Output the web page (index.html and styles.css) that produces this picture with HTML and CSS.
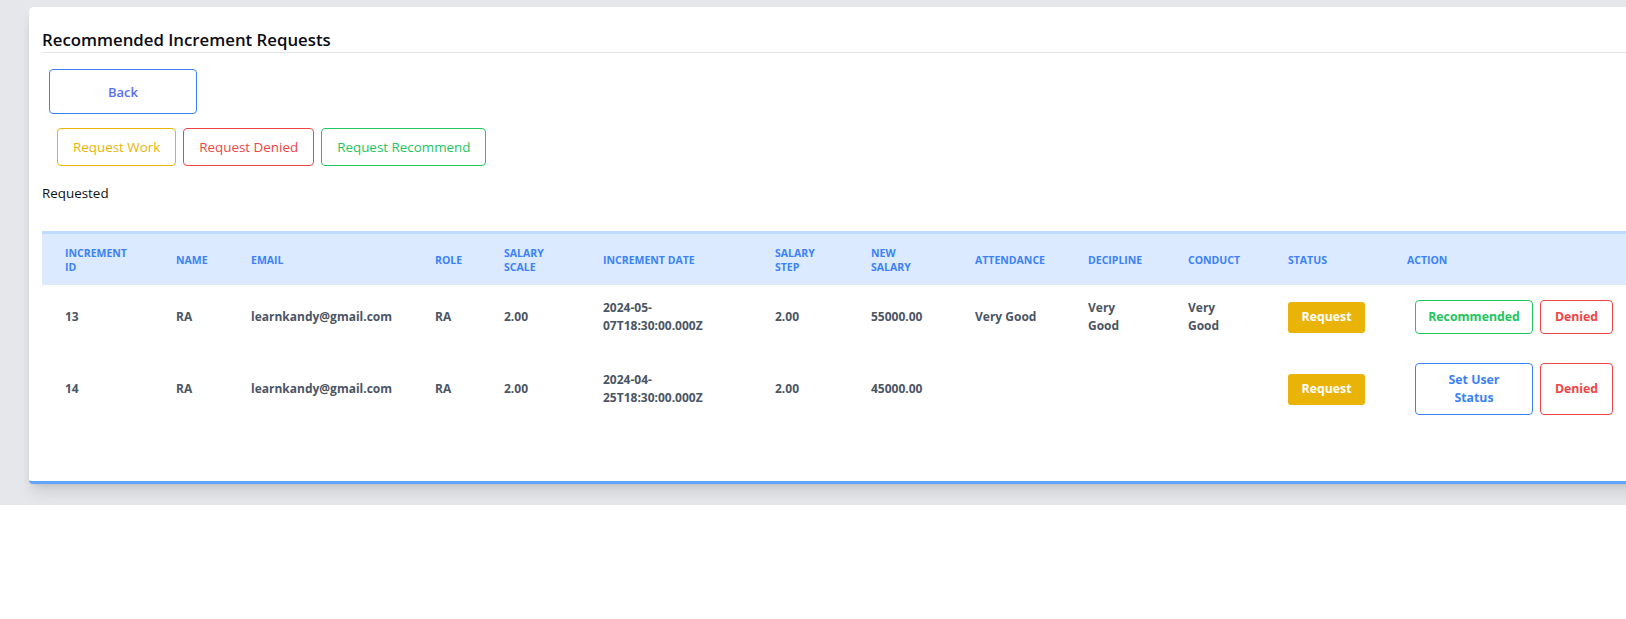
FILE: index.html
```html
<!DOCTYPE html>
<html lang="en">
<head>
<meta charset="utf-8">
<title>Recommended Increment Requests</title>
<link rel="stylesheet" href="styles.css">
</head>
<body>
<div class="page">
  <section class="card">
    <h2 class="card-title">Recommended Increment Requests</h2>
    <div class="back-row">
      <button class="btn-back">Back</button>
    </div>
    <div class="filter-row">
      <button class="btn-filter btn-yellow">Request Work</button>
      <button class="btn-filter btn-red">Request Denied</button>
      <button class="btn-filter btn-green">Request Recommend</button>
    </div>
    <p class="status-label">Requested</p>
    <table class="data-table">
      <colgroup>
        <col class="c-id"><col class="c-name"><col class="c-email"><col class="c-role"><col class="c-scale"><col class="c-date"><col class="c-step"><col class="c-salary"><col class="c-att"><col class="c-dec"><col class="c-con"><col class="c-status"><col class="c-action">
      </colgroup>
      <thead>
        <tr>
          <th>Increment<br>ID</th>
          <th>Name</th>
          <th>Email</th>
          <th>Role</th>
          <th>Salary<br>Scale</th>
          <th>Increment Date</th>
          <th>Salary<br>Step</th>
          <th>New<br>Salary</th>
          <th>Attendance</th>
          <th>Decipline</th>
          <th>Conduct</th>
          <th>Status</th>
          <th>Action</th>
        </tr>
      </thead>
      <tbody>
        <tr>
          <td>13</td>
          <td>RA</td>
          <td>learnkandy@gmail.com</td>
          <td>RA</td>
          <td>2.00</td>
          <td>2024-05-<wbr>07T18:30:00.000Z</td>
          <td>2.00</td>
          <td>55000.00</td>
          <td class="nowrap">Very Good</td>
          <td>Very Good</td>
          <td>Very Good</td>
          <td><span class="badge">Request</span></td>
          <td>
            <div class="actions">
              <button class="btn-act act-green act-wide">Recommended</button>
              <button class="btn-act act-red">Denied</button>
            </div>
          </td>
        </tr>
        <tr>
          <td>14</td>
          <td>RA</td>
          <td>learnkandy@gmail.com</td>
          <td>RA</td>
          <td>2.00</td>
          <td>2024-04-<wbr>25T18:30:00.000Z</td>
          <td>2.00</td>
          <td>45000.00</td>
          <td></td>
          <td></td>
          <td></td>
          <td><span class="badge">Request</span></td>
          <td>
            <div class="actions">
              <button class="btn-act act-blue act-wide">Set User Status</button>
              <button class="btn-act act-red">Denied</button>
            </div>
          </td>
        </tr>
      </tbody>
    </table>
  </section>
</div>
</body>
</html>
```

FILE: styles.css
```css
* { box-sizing: border-box; }

html, body {
  margin: 0;
  padding: 0;
  background: #ffffff;
  font-family: "Open Sans", "Noto Sans", sans-serif;
  color: #111827;
}

.page {
  background: #e5e7eb;
  padding: 7px 0 21px 29px;
  overflow: hidden;
}

.card {
  width: 1640px;
  background: #ffffff;
  border-radius: 5px 0 0 4px;
  border-bottom: 3px solid #60a5fa;
  padding: 21px 0 52px 13px;
  box-shadow: 0 10px 15px -3px rgba(0,0,0,0.12), 0 4px 6px -4px rgba(0,0,0,0.1);
}

.card-title {
  margin: 0;
  font-size: 16.8px;
  font-weight: 600;
  line-height: 24px;
  color: #0b0b14;
  border-bottom: 1px solid #e3e4e8;
}

.back-row {
  margin-top: 16px;
  padding-left: 7px;
}

.btn-back {
  width: 148px;
  height: 45px;
  background: #fff;
  border: 1px solid #3b82f6;
  border-radius: 4px;
  color: #5b6ff0;
  font-family: inherit;
  font-size: 13px;
  font-weight: 600;
  cursor: pointer;
}

.filter-row {
  margin-top: 14px;
  padding-left: 15px;
  display: flex;
  gap: 7px;
}

.btn-filter {
  height: 38px;
  padding: 0 15px;
  background: #fff;
  border: 1px solid;
  border-radius: 4px;
  font-family: inherit;
  font-size: 13.4px;
  font-weight: 400;
  cursor: pointer;
}

.btn-yellow { border-color: #eab308; color: #eab308; }
.btn-red { border-color: #ef4444; color: #ef4444; }
.btn-green { border-color: #22c55e; color: #22c55e; }

.status-label {
  margin: 17px 0 0 0;
  font-size: 13.4px;
  line-height: 20px;
  color: #111;
}

.data-table {
  margin-top: 28px;
  border-collapse: collapse;
  table-layout: fixed;
  width: 1620px;
}

.c-id { width: 111px; }
.c-name { width: 75px; }
.c-email { width: 184px; }
.c-role { width: 69px; }
.c-scale { width: 99px; }
.c-date { width: 172px; }
.c-step { width: 96px; }
.c-salary { width: 104px; }
.c-att { width: 113px; }
.c-dec { width: 100px; }
.c-con { width: 100px; }
.c-status { width: 119px; }
.c-action { width: 278px; }

.data-table thead tr {
  background: #dbeafe;
  border-top: 3px solid #bfdbfe;
}

.data-table th {
  text-align: left;
  padding: 12px 24px 11px 23px;
  font-size: 10.5px;
  font-weight: 700;
  line-height: 14px;
  color: #3b82f6;
  text-transform: uppercase;
  vertical-align: middle;
  height: 51px;
}

.data-table td {
  padding: 14px 24px 14px 23px;
  font-size: 12px;
  font-weight: 700;
  line-height: 18px;
  color: #4b5563;
  vertical-align: middle;
}

.data-table td.nowrap { white-space: nowrap; }

.badge {
  display: inline-flex;
  align-items: center;
  justify-content: center;
  width: 77px;
  height: 31px;
  background: #eab308;
  color: #ffffff;
  border-radius: 3px;
  font-size: 12.3px;
  font-weight: 700;
}

.actions {
  display: flex;
  gap: 7px;
  margin-left: 8px;
}

.btn-act {
  display: inline-flex;
  align-items: center;
  justify-content: center;
  text-align: center;
  padding: 7px 14px;
  background: #fff;
  border: 1px solid;
  border-radius: 4px;
  font-family: inherit;
  font-size: 12.3px;
  font-weight: 700;
  line-height: 18px;
  cursor: pointer;
}

.act-wide { width: 118px; }
.act-green { border-color: #22c55e; color: #22c55e; }
.act-red { border-color: #ef4444; color: #ef4444; width: 73px; }
.act-blue { border-color: #3b82f6; color: #3b82f6; }
```
